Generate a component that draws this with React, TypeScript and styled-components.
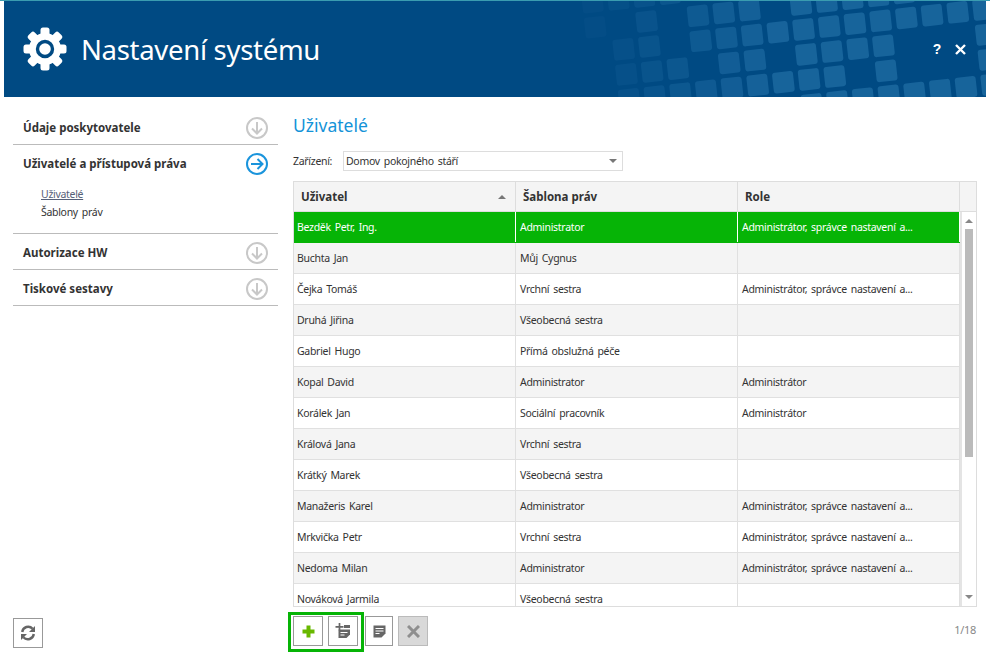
import React from "react";
import styled, { createGlobalStyle } from "styled-components";

const Global = createGlobalStyle`
  html, body { margin: 0; padding: 0; background: #fff; }
  body {
    font-family: "Noto Sans", "DejaVu Sans", sans-serif;
    font-size: 10.5px;
    letter-spacing: -0.3px;
    word-spacing: 1.5px;
    color: #333;
  }
  * { box-sizing: border-box; }
`;

const Page = styled.div`
  width: 990px;
  height: 658px;
  display: flex;
  flex-direction: column;
  overflow: hidden;
  border-top: 1px solid #3a9cb0;
`;
const Header = styled.header`
  position: relative;
  height: 96px;
  margin: 0 4px;
  flex: none;
  background: #004a83;
  display: flex;
  align-items: center;
  padding: 0 19px;
  color: #fff;
  overflow: hidden;
`;
const Pattern = styled.svg`
  position: absolute;
  left: 0;
  top: 0;
`;
const GearBox = styled.svg`
  position: relative;
  flex: none;
`;
const Title = styled.h1`
  position: relative;
  margin: 0 0 0 14px;
  font-weight: 400;
  font-size: 27.5px;
  letter-spacing: -0.3px;
  word-spacing: 0;
  flex: 1;
`;
const HeaderActions = styled.div`
  position: relative;
  display: flex;
  align-items: center;
  gap: 14px;
  padding-right: 1px;
`;
const Help = styled.span`
  font-size: 14px;
  font-weight: 700;
  font-family: "Liberation Sans", sans-serif;
`;
const Body = styled.div`
  flex: 1;
  display: flex;
  min-height: 0;
`;
const Sidebar = styled.aside`
  width: 293px;
  flex: none;
  padding: 12px 15px 10px 13px;
  display: flex;
  flex-direction: column;
  justify-content: space-between;
`;
const Section = styled.section`
  border-bottom: 1px solid #bbb;
`;
const SectionHead = styled.div`
  display: flex;
  align-items: center;
  justify-content: space-between;
  padding: 8px 10px 5px 10px;
  height: 35px;
`;
const SectionLabel = styled.span`
  padding-bottom: 1px;
  font-weight: 700;
  font-size: 11.5px;
  letter-spacing: 0;
  word-spacing: 0;
  color: #333;
`;
const SubList = styled.div`
  padding: 5px 0 12px 28px;
  display: flex;
  flex-direction: column;
`;
const SubItem = styled.a<{ $active?: boolean }>`
  height: 18px;
  line-height: 18px;
  color: ${(p) => (p.$active ? "#566078" : "#333")};
  text-decoration: ${(p) => (p.$active ? "underline" : "none")};
`;
const Main = styled.main`
  flex: 1;
  min-width: 0;
  padding: 17px 13px 0 0;
  display: flex;
  flex-direction: column;
`;
const Heading = styled.h2`
  margin: 0 0 15px;
  height: 22px;
  line-height: 22px;
  font-size: 17.5px;
  font-weight: 400;
  letter-spacing: 0;
  word-spacing: 0;
  color: #1493d8;
`;
const FilterRow = styled.div`
  display: flex;
  align-items: center;
  height: 20px;
  margin-bottom: 10px;
`;
const FilterLabel = styled.span`
  width: 50px;
  flex: none;
`;
const Select = styled.div`
  width: 280px;
  height: 20px;
  border: 1px solid #ddd;
  padding: 0 5px 0 2px;
  display: flex;
  align-items: center;
  justify-content: space-between;
`;
const Caret = styled.span<{ $up?: boolean; $color?: string }>`
  width: 0;
  height: 0;
  border-left: 4px solid transparent;
  border-right: 4px solid transparent;
  ${(p) =>
    p.$up
      ? `border-bottom: 4px solid ${p.$color || "#777"};`
      : `border-top: 4px solid ${p.$color || "#777"};`}
`;
const Table = styled.div`
  width: 684px;
  flex: 1;
  min-height: 0;
  border: 1px solid #ddd;
  display: flex;
  flex-direction: column;
`;
const Columns = "222px 222px 222px";
const HeadRow = styled.div`
  display: grid;
  grid-template-columns: ${Columns} 16px;
  height: 30px;
  flex: none;
  background: #f4f4f4;
  border-bottom: 1px solid #ddd;
`;
const HeadCell = styled.div`
  display: flex;
  align-items: center;
  justify-content: space-between;
  padding: 0 9px 0 7px;
  font-weight: 700;
  font-size: 11.5px;
  letter-spacing: 0;
  word-spacing: 0;
  border-right: 1px solid #ddd;
  &:last-child { border-right: 0; }
`;
const TableBody = styled.div`
  flex: 1;
  min-height: 0;
  display: flex;
`;
const Rows = styled.div`
  width: 666px;
  overflow: hidden;
`;
const Row = styled.div<{ $selected?: boolean; $even?: boolean }>`
  display: grid;
  grid-template-columns: ${Columns};
  height: 31px;
  background: ${(p) => (p.$selected ? "#06b406" : p.$even ? "#f4f4f4" : "#fff")};
  color: ${(p) => (p.$selected ? "#fff" : "#333")};
  border-bottom: 1px solid ${(p) => (p.$selected ? "#06b406" : "#e0e0e0")};
`;
const Cell = styled.div<{ $selected?: boolean }>`
  display: flex;
  align-items: center;
  padding: 0 3px 1px;
  white-space: nowrap;
  overflow: hidden;
  border-right: 1px solid ${(p) => (p.$selected ? "#fff" : "#e0e0e0")};
  & + & { padding-left: 4px; }
`;
const Scroll = styled.div`
  width: 16px;
  display: flex;
  flex-direction: column;
  align-items: center;
  border-left: 2px solid #e4e4e4;
  padding-top: 7px;
`;
const Thumb = styled.div`
  width: 8px;
  height: 228px;
  margin-top: 6px;
  background: #bbb;
`;
const Spacer = styled.div`
  flex: 1;
`;
const ScrollEnd = styled.div`
  padding-bottom: 7px;
  display: flex;
`;
const Footer = styled.div`
  height: 51px;
  flex: none;
  padding-top: 9px;
  display: flex;
  align-items: flex-start;
  justify-content: space-between;
`;
const ButtonGroup = styled.div`
  position: relative;
  display: flex;
  gap: 5px;
`;
const Highlight = styled.div`
  position: absolute;
  left: -5px;
  top: -4px;
  width: 76px;
  height: 40px;
  border: 3px solid #06b406;
  pointer-events: none;
`;
const IconButton = styled.button<{ $disabled?: boolean }>`
  width: 30px;
  height: 30px;
  padding: 0;
  display: flex;
  align-items: center;
  justify-content: center;
  background: ${(p) => (p.$disabled ? "#d9d9d9" : "#fff")};
  border: 1px solid ${(p) => (p.$disabled ? "#bbb" : "#999")};
`;
const EditButton = styled(IconButton)`
  width: 28px;
  margin-left: 2px;
`;
const Pager = styled.div`
  margin-top: 6px;
  margin-right: 1px;
  color: #888;
  font-size: 11px;
`;

const rows: [string, string, string][] = [
  ["Bezděk Petr, Ing.", "Administrator", "Administrátor, správce nastavení a..."],
  ["Buchta Jan", "Můj Cygnus", ""],
  ["Čejka Tomáš", "Vrchní sestra", "Administrátor, správce nastavení a..."],
  ["Druhá Jiřina", "Všeobecná sestra", ""],
  ["Gabriel Hugo", "Přímá obslužná péče", ""],
  ["Kopal David", "Administrator", "Administrátor"],
  ["Korálek Jan", "Sociální pracovník", "Administrátor"],
  ["Králová Jana", "Vrchní sestra", ""],
  ["Krátký Marek", "Všeobecná sestra", ""],
  ["Manažeris Karel", "Administrator", "Administrátor, správce nastavení a..."],
  ["Mrkvička Petr", "Vrchní sestra", "Administrátor, správce nastavení a..."],
  ["Nedoma Milan", "Administrator", "Administrátor, správce nastavení a..."],
  ["Nováková Jarmila", "Všeobecná sestra", ""],
];

const tiles: [number, number][] = [
  ...[-10, -9, -8, -7].map((i) => [i, -2] as [number, number]),
  ...[-10, -8, -6, -5, -4, -2, -1, 0, 1, 2].map((i) => [i, -1] as [number, number]),
  ...[-9, -8, -6, -5, -4, -3, -2, -1, 0, 1, 2, 3, 4, 5].map((i) => [i, 0] as [number, number]),
  ...[-9, -8, -7, -5, -4, -2, -1, 0, 1, 5].map((i) => [i, 1] as [number, number]),
  ...[-9, -8, -7, -6, -5, -4, -3, -2, -1, 1, 5].map((i) => [i, 2] as [number, number]),
  ...[-2, -1, 0, 1, 2, 3, 4, 5].map((i) => [i, 3] as [number, number]),
];

function tileOpacity(x: number) {
  if (x < 600) return 0.03;
  if (x > 780) return 0.2;
  return 0.03 + ((x - 600) / 180) * 0.17;
}

const HeaderPattern = () => (
  <Pattern width={982} height={96} aria-hidden>
    {tiles.map(([i, j]) => {
      const cx = 855 + 25.7 * i + 2.75 * j - 4;
      const cy = 23.7 - 2.85 * i + 25 * j - 1;
      return (
        <rect
          key={`${i}_${j}`}
          x={cx - 10.5}
          y={cy - 10.5}
          width={21}
          height={21}
          rx={3}
          fill="#73ccff"
          opacity={tileOpacity(cx + 4)}
          transform={`rotate(-6.3 ${cx} ${cy})`}
        />
      );
    })}
  </Pattern>
);

const Gear = () => (
  <GearBox width={44} height={44} viewBox="0 0 44 44" aria-hidden>
    {[0, 45, 90, 135, 180, 225, 270, 315].map((a) => (
      <rect key={a} x={17.5} y={0.5} width={9} height={10} rx={2.5} fill="#fff" transform={`rotate(${a} 22 22)`} />
    ))}
    <circle cx={22} cy={22} r={16} fill="#fff" />
    <circle cx={22} cy={22} r={7.5} fill="none" stroke="#004a83" strokeWidth={3.4} />
  </GearBox>
);

const CloseIcon = () => (
  <svg width={11} height={11} viewBox="0 0 11 11" aria-hidden>
    <path d="M1 1l9 9M10 1l-9 9" stroke="#fff" strokeWidth={2.4} fill="none" />
  </svg>
);

const CircleArrow = ({ active }: { active?: boolean }) => {
  const c = active ? "#1a94dc" : "#c8c8c8";
  return (
    <svg width={22} height={22} viewBox="0 0 22 22" aria-hidden>
      <circle cx={11} cy={11} r={10} fill="none" stroke={c} strokeWidth={2} />
      {active ? (
        <path d="M5 11h11M11.5 6l5 5-5 5" fill="none" stroke={c} strokeWidth={2} />
      ) : (
        <path d="M11 5v11M6 11.5l5 5 5-5" fill="none" stroke={c} strokeWidth={2} />
      )}
    </svg>
  );
};

const PlusIcon = () => (
  <svg width={13} height={13} viewBox="0 0 13 13" aria-hidden>
    <path d="M6.5 0.5v12M0.5 6.5h12" stroke="#68b800" strokeWidth={4} fill="none" />
  </svg>
);
const AddDocIcon = () => (
  <svg width={18} height={18} viewBox="0 0 18 18" aria-hidden>
    <path d="M5.5 1v7.5M1.5 4.8h8" stroke="#666" strokeWidth={1.7} fill="none" />
    <path d="M10 3h6v3h-6z" fill="#666" />
    <path d="M4.5 7.5h11.5v5L12.5 16H4.5z" fill="#666" />
    <path d="M6.5 10.5h7M6.5 13h4" stroke="#fff" strokeWidth={1} fill="none" />
  </svg>
);
const DocIcon = () => (
  <svg width={13} height={13} viewBox="0 0 13 13" aria-hidden>
    <path d="M0.5 0.5h12v8l-4 4h-8z" fill="#666" />
    <path d="M2.5 3.5h8M2.5 6h8M2.5 8.5h4" stroke="#fff" strokeWidth={1} fill="none" />
  </svg>
);
const DeleteIcon = () => (
  <svg width={13} height={13} viewBox="0 0 13 13" aria-hidden>
    <path d="M1 1l11 11M12 1L1 12" stroke="#8f8f8f" strokeWidth={3} fill="none" />
  </svg>
);
const RefreshIcon = () => (
  <svg width={16} height={16} viewBox="0 0 16 16" aria-hidden>
    <path d="M2.2 7A6 6 0 0 1 12.6 3.7" fill="none" stroke="#666" strokeWidth={2.4} />
    <path d="M15 1v6H9z" fill="#666" />
    <path d="M13.8 9A6 6 0 0 1 3.4 12.3" fill="none" stroke="#666" strokeWidth={2.4} />
    <path d="M1 15V9h6z" fill="#666" />
  </svg>
);

export default function App() {
  return (
    <Page>
      <Global />
      <Header>
        <HeaderPattern />
        <Gear />
        <Title>Nastavení systému</Title>
        <HeaderActions>
          <Help>?</Help>
          <CloseIcon />
        </HeaderActions>
      </Header>
      <Body>
        <Sidebar>
          <div>
            <Section>
              <SectionHead><SectionLabel>Údaje poskytovatele</SectionLabel><CircleArrow /></SectionHead>
            </Section>
            <Section>
              <SectionHead><SectionLabel>Uživatelé a přístupová práva</SectionLabel><CircleArrow active /></SectionHead>
              <SubList>
                <SubItem $active>Uživatelé</SubItem>
                <SubItem>Šablony práv</SubItem>
              </SubList>
            </Section>
            <Section>
              <SectionHead><SectionLabel>Autorizace HW</SectionLabel><CircleArrow /></SectionHead>
            </Section>
            <Section>
              <SectionHead><SectionLabel>Tiskové sestavy</SectionLabel><CircleArrow /></SectionHead>
            </Section>
          </div>
          <IconButton aria-label="Obnovit"><RefreshIcon /></IconButton>
        </Sidebar>
        <Main>
          <Heading>Uživatelé</Heading>
          <FilterRow>
            <FilterLabel>Zařízení:</FilterLabel>
            <Select>
              <span>Domov pokojného stáří</span>
              <Caret />
            </Select>
          </FilterRow>
          <Table>
            <HeadRow>
              <HeadCell>Uživatel<Caret $up /></HeadCell>
              <HeadCell>Šablona práv</HeadCell>
              <HeadCell>Role</HeadCell>
              <HeadCell />
            </HeadRow>
            <TableBody>
              <Rows>
                {rows.map((r, idx) => (
                  <Row key={r[0]} $selected={idx === 0} $even={idx % 2 === 1}>
                    {r.map((t, c) => (
                      <Cell key={c} $selected={idx === 0}>{t}</Cell>
                    ))}
                  </Row>
                ))}
              </Rows>
              <Scroll>
                <Caret $up $color="#888" />
                <Thumb />
                <Spacer />
                <ScrollEnd><Caret $color="#888" /></ScrollEnd>
              </Scroll>
            </TableBody>
          </Table>
          <Footer>
            <ButtonGroup>
              <IconButton aria-label="Přidat"><PlusIcon /></IconButton>
              <IconButton aria-label="Přidat ze šablony"><AddDocIcon /></IconButton>
              <EditButton aria-label="Upravit"><DocIcon /></EditButton>
              <IconButton $disabled aria-label="Smazat"><DeleteIcon /></IconButton>
              <Highlight />
            </ButtonGroup>
            <Pager>1/18</Pager>
          </Footer>
        </Main>
      </Body>
    </Page>
  );
}
